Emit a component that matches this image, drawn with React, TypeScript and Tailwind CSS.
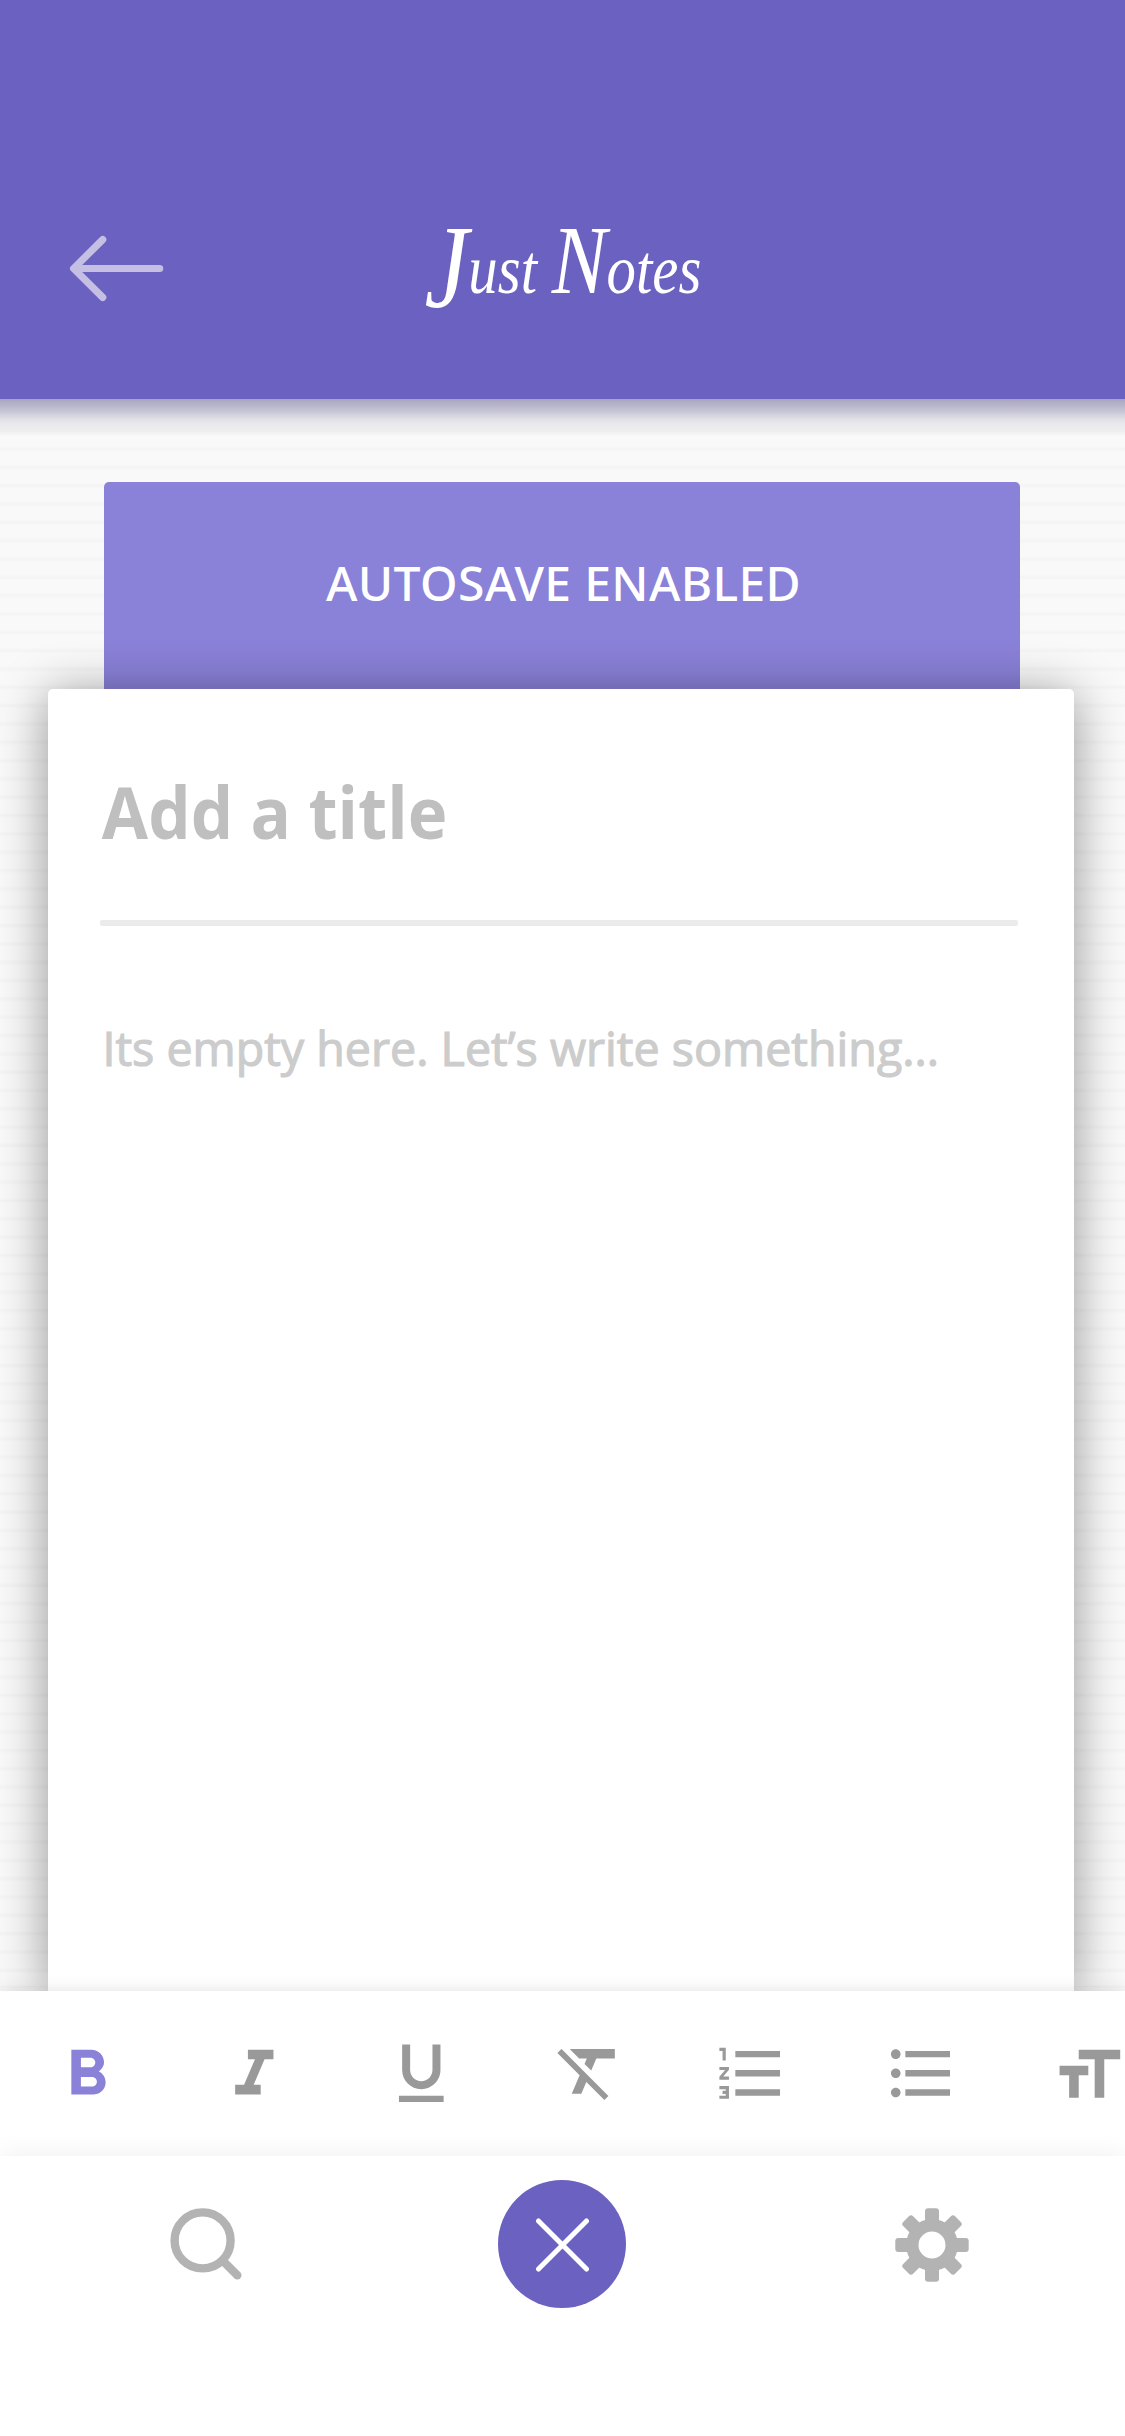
const formatTools = [
  {
    name: 'Bold',
    place: 'ml-[48.7px] mt-[46px] text-[#8a81d8]',
    d: 'M15.6 10.79c.97-.67 1.65-1.77 1.65-2.79 0-2.26-1.75-4-4-4H7v14h7.04c2.09 0 3.71-1.7 3.71-3.79 0-1.52-.86-2.82-2.15-3.42zM10 6.5h3c.83 0 1.5.67 1.5 1.5s-.67 1.5-1.5 1.5h-3v-3zm3.5 9H10v-3h3.5c.83 0 1.5.67 1.5 1.5s-.67 1.5-1.5 1.5z',
  },
  {
    name: 'Italic',
    place: 'ml-[90.6px] mt-[46px] text-[#999999]',
    d: 'M10 4v3h2.21l-3.42 8H6v3h8v-3h-2.21l3.42-8H18V4z',
  },
  {
    name: 'Underline',
    place: 'ml-[90.2px] mt-[43.5px] text-[#999999]',
    d: 'M12 17c3.31 0 6-2.69 6-6V3h-2.5v8c0 1.93-1.57 3.5-3.5 3.5S8.5 12.93 8.5 11V3H6v8c0 3.31 2.69 6 6 6zm-7 2v2h14v-2H5z',
  },
  {
    name: 'Clear formatting',
    place: 'ml-[91.7px] mt-[41.5px] text-[#999999]',
    d: 'M3.27 5L2 6.27l6.97 6.97L6.5 19h3l1.57-3.66L16.73 21 18 19.73 3.55 5.27 3.27 5zM6 5v.18L8.82 8h2.4l-.72 1.68 2.1 2.1L14.21 8H20V5H6z',
  },
  {
    name: 'Numbered list',
    place: 'ml-[85px] mt-[43.7px] text-[#999999]',
    d: 'M2 17h2v.5H3v1h1v.5H2v1h3v-4H2v1zm1-9h1V4H2v1h1v3zm-1 3h1.8L2 13.1v.9h3v-1H3.2L5 10.9V10H2v1zm5-6v2h14V5H7zm0 14h14v-2H7v2zm0-6h14v-2H7v2z',
  },
  {
    name: 'Bulleted list',
    place: 'ml-[93.7px] mt-[43.7px] text-[#999999]',
    d: 'M4 10.5c-.83 0-1.5.67-1.5 1.5s.67 1.5 1.5 1.5 1.5-.67 1.5-1.5-.67-1.5-1.5-1.5zm0-6c-.83 0-1.5.67-1.5 1.5S3.17 7.5 4 7.5 5.5 6.83 5.5 6 4.83 4.5 4 4.5zm0 12c-.83 0-1.5.68-1.5 1.5s.68 1.5 1.5 1.5 1.5-.68 1.5-1.5-.67-1.5-1.5-1.5zM7 19h14v-2H7v2zm0-6h14v-2H7v2zm0-8v2h14V5H7z',
  },
  {
    name: 'Text size',
    place: 'ml-[90.3px] mt-[46px] text-[#999999]',
    d: 'M9 4v3h5v12h3V7h5V4H9zm-6 8h3v7h3v-7h3V9H3v3z',
  },
];

const teeth = [0, 45, 90, 135, 180, 225, 270, 315];

function Header() {
  return (
    <header className="grid h-[399px] shrink-0 grid-cols-[1fr_auto_1fr] items-start bg-[#6b61c0]">
      <button aria-label="Back" className="mt-[232px] ml-[66px] w-[102px]">
        <svg className="block h-[73px] w-[102px]" viewBox="0 0 102 73" fill="none" stroke="#c4bfe3" strokeWidth="7.2" strokeLinecap="round" strokeLinejoin="round">
          <path d="M36.7 7.6L7.6 36.5L36.7 65.4M9 36.5H93.7" />
        </svg>
      </button>
      <h1 className="mt-[209px] h-[110px] origin-center scale-x-[0.84] font-['Liberation_Serif',serif] text-[70px] leading-[110px] whitespace-nowrap text-white italic">
        <span className="align-[-14px] text-[118px] leading-none">J</span>ust{' '}
        <span className="text-[98px] leading-none">N</span>otes
      </h1>
    </header>
  );
}

function NoteCard() {
  return (
    <section className="relative ml-[48px] w-[1026px] flex-1 rounded-t-[5px] bg-white px-[52px] pt-[82px] shadow-[0_6px_50px_rgba(0,0,0,0.42)]">
      <h2 className="origin-left scale-x-[0.932] pl-[2px] text-[72px] leading-[80px] font-bold text-[#bfbfbf]">Add a title</h2>
      <div className="mt-[69px] h-[6px] w-[918px] rounded-[2px] bg-[#ebebeb]" />
      <p className="mt-[92px] origin-left scale-x-[0.971] pl-[2.5px] text-[48px] leading-[60px] whitespace-nowrap text-[#cccccc] [-webkit-text-stroke:1.2px_#cccccc]">
        Its empty here. Let’s write something...
      </p>
    </section>
  );
}

function FormatBar() {
  return (
    <div className="relative flex h-[165px] shrink-0 items-start overflow-hidden bg-white">
      {formatTools.map((tool) => (
        <button key={tool.name} aria-label={tool.name} className={`shrink-0 ${tool.place}`}>
          <svg className="block size-[76.6px]" viewBox="0 0 24 24" fill="currentColor">
            <path d={tool.d} />
          </svg>
        </button>
      ))}
    </div>
  );
}

function BottomNav() {
  return (
    <nav className="relative flex h-[280px] shrink-0 items-start bg-white shadow-[0_0_26px_rgba(0,0,0,0.07)]">
      <button aria-label="Search" className="mt-[48px] ml-[166px]">
        <svg className="block size-[80px]" viewBox="0 0 80 80" fill="none" stroke="#b3b3b3" strokeLinecap="round">
          <circle cx="36.6" cy="36.4" r="28" strokeWidth="8.4" />
          <path d="M57 57L71.3 71.3" strokeWidth="8.4" />
        </svg>
      </button>
      <button aria-label="Close" className="mt-[24px] ml-[252px] flex size-[128px] items-center justify-center rounded-full bg-[#6b61c0]">
        <svg className="block size-[56px]" viewBox="0 0 56 56" fill="none" stroke="#ffffff" strokeWidth="5" strokeLinecap="round">
          <path d="M4.5 5L52.5 53M52.5 5L4.5 53" />
        </svg>
      </button>
      <button aria-label="Settings" className="mt-[49px] ml-[266px]">
        <svg className="block size-[80px]" viewBox="-40 -40 80 80">
          <circle r="19.7" fill="none" stroke="#b3b3b3" strokeWidth="12.4" />
          {teeth.map((angle) => (
            <rect key={angle} x="-7" y="-36.7" width="14" height="16" rx="3" fill="#b3b3b3" transform={`rotate(${angle})`} />
          ))}
        </svg>
      </button>
    </nav>
  );
}

export default function App() {
  return (
    <div className="flex h-[2436px] w-[1125px] flex-col overflow-hidden bg-white font-['Open_Sans',sans-serif]">
      <Header />
      <main className="flex flex-1 flex-col overflow-hidden bg-[repeating-linear-gradient(to_bottom,#f4f4f4_0px,#f9f9f9_3px,#f9f9f9_15.33px,#f4f4f4_18.33px)] bg-[position:0_-5px]">
        <div className="h-[83px] shrink-0 bg-[linear-gradient(to_bottom,#a8a4be_0px,#c6c4d5_12px,#dedde3_19px,#e9e9ee_25px,#eeeeee_32px,#f9f9f9_37px,#f9f9f9_44px,#f9f9f900_46px)]" />
        <div className="ml-[104px] h-[207px] w-[916px] shrink-0 rounded-t-[5px] bg-[#8a81d8] pl-[3px] text-center font-['Noto_Sans',sans-serif] text-[48px] leading-[201px] font-medium tracking-[0.35px] text-white">
          AUTOSAVE ENABLED
        </div>
        <NoteCard />
      </main>
      <div className="relative shrink-0 shadow-[0_0_16px_rgba(0,0,0,0.12)]">
        <FormatBar />
        <BottomNav />
      </div>
    </div>
  );
}
